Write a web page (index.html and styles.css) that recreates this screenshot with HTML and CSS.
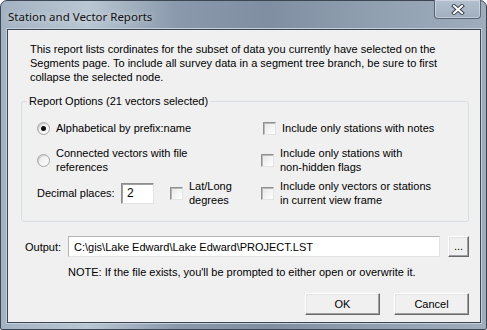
FILE: index.html
```html
<!DOCTYPE html>
<html lang="en">
<head>
  <meta charset="UTF-8">
  <title>Station and Vector Reports</title>
  <link rel="stylesheet" href="styles.css">
</head>
<body>
  <div class="window">
    <div class="titlebar">
      <span class="title">Station and Vector Reports</span>
      <button class="close" aria-label="Close">
        <svg width="14" height="11" viewBox="0 0 14 11">
          <path d="M3 2 L11 9 M11 2 L3 9" stroke="#3d4550" stroke-width="4" stroke-linecap="square"/>
          <path d="M3 2 L11 9 M11 2 L3 9" stroke="#fff" stroke-width="2" stroke-linecap="square"/>
        </svg>
      </button>
    </div>

    <div class="client">
      <p class="intro">This report lists cordinates for the subset of data you currently have selected on the<br>Segments page. To include all survey data in a segment tree branch, be sure to first<br>collapse the selected node.</p>

      <fieldset class="group">
        <legend>Report Options (21 vectors selected)</legend>

        <div class="opt-row">
          <label class="opt"><span class="radio checked"></span>Alphabetical by prefix:name</label>
          <label class="opt first"><span class="check"></span>Include only stations with notes</label>
        </div>

        <div class="opt-row tall">
          <label class="opt"><span class="radio"></span>Connected vectors with file<br>references</label>
          <label class="opt"><span class="check"></span>Include only stations with<br>non-hidden flags</label>
        </div>

        <div class="opt-row tight">
          <div class="decimals">
            <span class="dec-label">Decimal places:</span>
            <span class="field small">2</span>
            <label class="opt"><span class="check"></span>Lat/Long<br>degrees</label>
          </div>
          <label class="opt"><span class="check"></span>Include only vectors or stations<br>in current view frame</label>
        </div>
      </fieldset>

      <div class="output-row">
        <span class="out-label">Output:</span>
        <span class="field wide">C:\gis\Lake Edward\Lake Edward\PROJECT.LST</span>
        <button class="btn browse">...</button>
      </div>

      <p class="note">NOTE: If the file exists, you'll be prompted to either open or overwrite it.</p>

      <div class="actions">
        <button class="btn">OK</button>
        <button class="btn">Cancel</button>
      </div>
    </div>
  </div>
</body>
</html>
```

FILE: styles.css
```css
* { margin: 0; padding: 0; box-sizing: border-box; }
body {
  background: #fff;
  font-family: 'Liberation Sans', Arial, sans-serif;
  font-size: 11px;
  color: #000;
}
.window {
  width: 487px;
  height: 330px;
  border: 1px solid #3c4654;
  border-radius: 7px 7px 2px 2px;
  padding: 0 5px 6px 6px;
  background: linear-gradient(to right, #a3b2c2 0%, #b9c6d3 18%, #8a9aac 36%, #7f8fa1 55%, #93a2b3 80%, #9eacbb 100%);
  display: flex;
  flex-direction: column;
}
.titlebar {
  height: 28px;
  display: flex;
  align-items: flex-start;
  justify-content: space-between;
}
.title {
  align-self: center;
  margin-left: 1px;
  margin-top: 2px;
  font-family: 'Noto Sans', 'Open Sans', sans-serif;
  font-size: 11.5px;
  color: #111;
  text-shadow: 0 0 6px rgba(255,255,255,0.7);
}
.close {
  width: 47px;
  height: 19px;
  margin-top: -1px;
  border: 1px solid #5b6674;
  border-top: none;
  border-radius: 0 0 4px 4px;
  background: linear-gradient(#b3c0ce, #a0afbf);
  box-shadow: inset 0 0 0 1px rgba(255,255,255,0.35);
  display: flex;
  align-items: center;
  justify-content: center;
}
.client {
  flex: 1;
  background: #f0f0f0;
  border: 1px solid #3d4753;
  outline: 1px solid #c3cedb;
  padding: 12px 11px 6px 13px;
  display: flex;
  flex-direction: column;
}
.intro {
  margin: 0 0 10px 9px;
  line-height: 14px;
}
.group {
  border: 1px solid #d5dfe5;
  border-radius: 3px;
  padding: 13px 0 14px 15px;
  min-width: 0;
}
.group legend {
  margin-left: -10px;
  padding: 0 2px;
  line-height: 14px;
}
.opt-row {
  display: grid;
  grid-template-columns: 224px 1fr;
  align-items: center;
}
.opt-row.tall { margin-top: 11px; }
.opt-row.tight { margin-top: 5px; }
.opt {
  display: flex;
  align-items: center;
  gap: 6px;
  line-height: 14px;
}
.opt.first { margin-left: 2px; }
.radio, .check {
  flex-shrink: 0;
  width: 13px;
  height: 13px;
  background: linear-gradient(135deg, #e6e6e6, #fff);
}
.radio {
  border-radius: 50%;
  border: 1px solid #a5a5a5;
  box-shadow: inset 1px 1px 0 #d0d0d0;
  position: relative;
}
.radio.checked::after {
  content: '';
  position: absolute;
  left: 3px;
  top: 3px;
  width: 5px;
  height: 5px;
  border-radius: 50%;
  background: #111;
}
.check {
  border: 1px solid;
  border-color: #8e8f8f #e3e3e3 #e3e3e3 #8e8f8f;
  box-shadow: inset 1px 1px 0 #b9b9b9;
}
.decimals {
  display: flex;
  align-items: center;
}
.dec-label { width: 84px; }
.field {
  display: flex;
  align-items: center;
  background: #fff;
  border: 1px solid;
  border-color: #8d8d8d #e3e3e3 #e3e3e3 #8d8d8d;
  box-shadow: inset 1px 1px 0 #a0a0a0;
  padding-left: 5px;
  white-space: nowrap;
  overflow: hidden;
}
.field.small {
  width: 33px;
  height: 21px;
  margin-right: 16px;
  font-size: 12px;
}
.output-row {
  display: flex;
  align-items: center;
  margin-top: 14px;
}
.out-label {
  width: 47px;
  padding-left: 4px;
}
.field.wide {
  width: 372px;
  height: 21px;
  border-color: #b5b5b5 #e3e3e3 #e3e3e3 #b5b5b5;
  box-shadow: none;
}
.btn {
  font: inherit;
  color: #000;
  background: #f0f0f0;
  border: 1px solid;
  border-color: #fff #696969 #696969 #fff;
  box-shadow: inset -1px -1px 0 #a0a0a0, inset 1px 1px 0 #e3e3e3;
  width: 75px;
  height: 22px;
}
.btn.browse {
  width: 21px;
  height: 21px;
  margin-left: 8px;
  line-height: 8px;
  padding-bottom: 2px;
}
.note {
  margin: 8px 0 0 47px;
  line-height: 14px;
}
.actions {
  display: flex;
  justify-content: flex-end;
  gap: 14px;
  margin-top: 14px;
}
```
